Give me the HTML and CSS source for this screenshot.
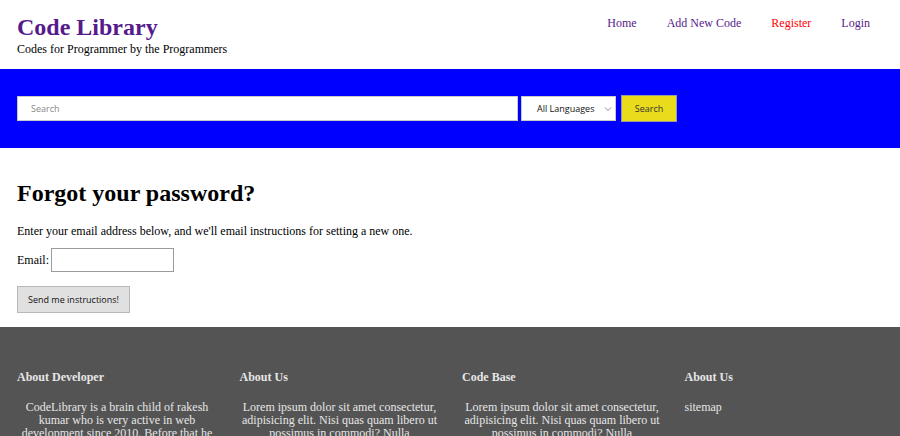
FILE: index.html
```html
<!DOCTYPE html>
<html>
<head>
<meta charset="utf-8">
<link rel="stylesheet" href="styles.css">
</head>
<body>
<header class="top">
  <div class="brand">
    <a class="logo" href="#">Code Library</a>
    <div class="tagline">Codes for Programmer by the Programmers</div>
  </div>
  <nav class="nav">
    <a href="#">Home</a>
    <a href="#">Add New Code</a>
    <a href="#" class="red">Register</a>
    <a href="#">Login</a>
  </nav>
</header>
<section class="band">
  <div class="search-box">Search</div>
  <div class="select">All Languages
    <svg class="chev" width="8" height="6" viewBox="0 0 8 6"><path d="M1 1.5 L4 4.5 L7 1.5" fill="none" stroke="#888" stroke-width="1"/></svg>
  </div>
  <div class="search-btn">Search</div>
</section>
<main class="main">
  <h1 class="title">Forgot your password?</h1>
  <p class="intro">Enter your email address below, and we'll email instructions for setting a new one.</p>
  <div class="field"><span>Email:</span><span class="email"></span></div>
  <div class="send">Send me instructions!</div>
</main>
<footer class="foot">
  <div class="col">
    <h4>About Developer</h4>
    <p class="center">CodeLibrary is a brain child of rakesh kumar who is very active in web development since 2010. Before that he</p>
  </div>
  <div class="col">
    <h4>About Us</h4>
    <p class="center">Lorem ipsum dolor sit amet consectetur, adipisicing elit. Nisi quas quam libero ut possimus in commodi? Nulla</p>
  </div>
  <div class="col">
    <h4>Code Base</h4>
    <p class="center">Lorem ipsum dolor sit amet consectetur, adipisicing elit. Nisi quas quam libero ut possimus in commodi? Nulla</p>
  </div>
  <div class="col">
    <h4>About Us</h4>
    <p>sitemap</p>
  </div>
</footer>
</body>
</html>
```
FILE: styles.css
```css
html, body { margin: 0; padding: 0; }
body {
  font-family: "Liberation Serif", "Times New Roman", serif;
  font-size: 12px;
  color: #000;
  background: #fff;
  height: 436px;
  overflow: hidden;
}
.top {
  height: 69px;
  display: flex;
  justify-content: space-between;
  align-items: flex-start;
  padding: 0 30px 0 17px;
  box-sizing: border-box;
}
.brand { padding-top: 12px; }
.logo {
  display: block;
  font-size: 24px;
  font-weight: bold;
  color: #551a8b;
  text-decoration: none;
  line-height: 30px;
}
.tagline { font-size: 12px; line-height: 14px; margin-top: 0; }
.nav {
  display: flex;
  gap: 30px;
  padding-top: 16px;
}
.nav a {
  color: #551a8b;
  text-decoration: none;
  font-size: 12px;
}
.nav a.red { color: #ff0000; }
.band {
  background: #0000ff;
  height: 79px;
  display: flex;
  align-items: center;
  padding: 0 17px;
  box-sizing: border-box;
  font-family: "Open Sans", "Liberation Sans", sans-serif;
  font-size: 9px;
}
.search-box {
  width: 501px;
  height: 25px;
  box-sizing: border-box;
  background: #fff;
  border: 1px solid #c8c8c8;
  color: #888;
  padding-left: 13px;
  line-height: 23px;
}
.select {
  margin-left: 3px;
  width: 95px;
  height: 25px;
  box-sizing: border-box;
  background: #fff;
  border: 1px solid #c8c8c8;
  color: #111;
  padding-left: 15px;
  line-height: 23px;
  position: relative;
}
.chev { position: absolute; right: 3px; top: 9px; }
.search-btn {
  margin-left: 5px;
  width: 56px;
  height: 27px;
  box-sizing: border-box;
  background: #e9dc1c;
  border: 1px solid #9a9a9a;
  color: #333;
  text-align: center;
  line-height: 25px;
}
.main { padding: 0 17px; height: 179px; box-sizing: border-box; padding-top: 31px; }
.title {
  font-size: 24px;
  font-weight: bold;
  margin: 0;
  line-height: 28px;
}
.intro { margin: 17px 0 0; line-height: 15px; }
.field {
  margin-top: 9px;
  display: flex;
  align-items: center;
  gap: 2px;
}
.email {
  display: inline-block;
  width: 123px;
  height: 24px;
  box-sizing: border-box;
  border: 1px solid #9b9b9b;
  background: #fff;
}
.send {
  margin-top: 14px;
  width: 113px;
  height: 27px;
  box-sizing: border-box;
  background: #e0e0e0;
  border: 1px solid #b8b8b8;
  font-family: "Open Sans", "Liberation Sans", sans-serif;
  font-size: 9px;
  text-align: center;
  line-height: 25px;
  color: #111;
}
.foot {
  background: #545454;
  height: 109px;
  box-sizing: border-box;
  display: grid;
  grid-template-columns: repeat(4, 222.5px);
  padding: 43px 0 0 17px;
  color: #e6e6e6;
}
.col { width: 200px; }
.col h4 { margin: 0; font-size: 12px; line-height: 14px; font-weight: bold; }
.col p { margin: 17px 0 0; line-height: 13px; }
.col p.center { text-align: center; }
```
